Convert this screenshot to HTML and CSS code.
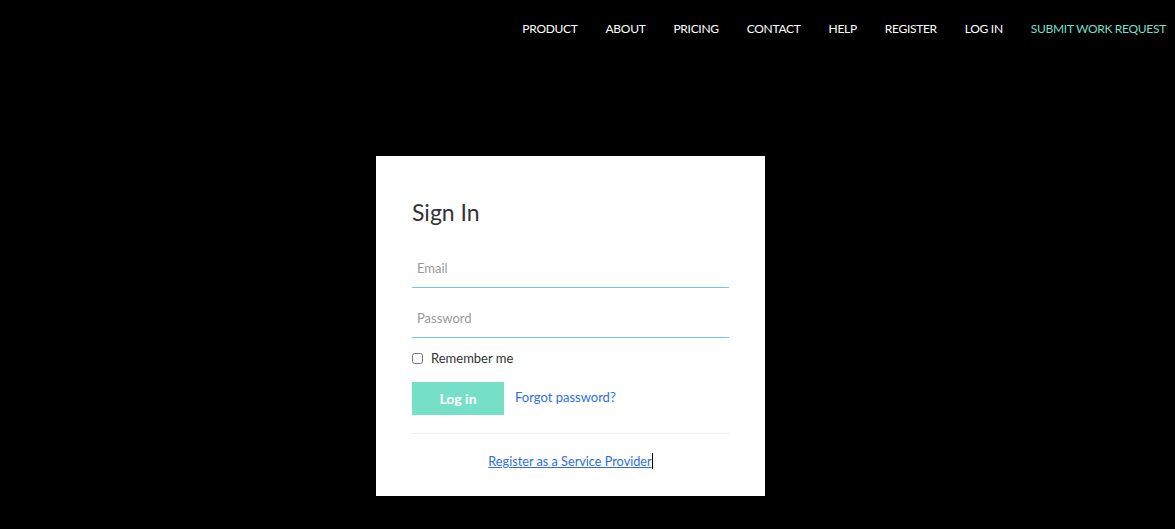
FILE: index.html
```html
<!DOCTYPE html>
<html lang="en">

<head>
    <meta charset="UTF-8">
    <meta name="viewport" content="width=device-width, initial-scale=1.0">
    <title>Sign In</title>
    <link rel="stylesheet" href="styles.css">
</head>

<body>
    <header class="top-bar">
        <ul class="nav">
            <li><a href="#">Product</a></li>
            <li><a href="#">About</a></li>
            <li><a href="#">Pricing</a></li>
            <li><a href="#">Contact</a></li>
            <li><a href="#">Help</a></li>
            <li><a href="#">Register</a></li>
            <li><a href="#">Log in</a></li>
            <li><a href="#" class="accent">Submit work request</a></li>
        </ul>
    </header>
    <main class="page">
        <form class="login-card">
            <h1 class="title">Sign In</h1>
            <input class="field" type="text" placeholder="Email">
            <input class="field" type="password" placeholder="Password">
            <label class="remember"><input type="checkbox"> Remember me</label>
            <div class="actions">
                <button type="button" class="btn">Log in</button>
                <a href="#" class="link">Forgot password?</a>
            </div>
            <div class="footer">
                <a href="#" class="link under">Register as a Service Provider</a><span class="caret"></span>
            </div>
        </form>
    </main>
</body>

</html>
```

FILE: styles.css
```css
body {
    margin: 0;
    padding: 0;
    background: #000;
    font-family: Lato, "Liberation Sans", sans-serif;
}

.top-bar {
    height: 52px;
    display: flex;
    justify-content: flex-end;
    align-items: center;
    padding-right: 9px;
    margin-bottom: 4px;
}

.nav {
    display: flex;
    gap: 28px;
    margin: 0;
    padding: 0;
    list-style: none;
}

.nav a {
    color: #fff;
    font-size: 12px;
    text-transform: uppercase;
    text-decoration: none;
    letter-spacing: -0.3px;
}

.nav a.accent {
    color: #76dfc8;
}

.page {
    display: flex;
    justify-content: center;
    padding-top: 100px;
}

.login-card {
    width: 317px;
    padding: 36px 36px 20px;
    background: #fff;
    margin-left: -34px;
}

.title {
    margin: 0 0 15px;
    font-size: 23px;
    font-weight: 400;
    color: #333;
    line-height: 40px;
}

.field {
    display: block;
    box-sizing: border-box;
    width: 100%;
    height: 41px;
    margin-bottom: 9px;
    padding: 0 5px;
    border: 0;
    box-shadow: inset 0 -1px 0 #6cccd0;
    font-family: inherit;
    font-size: 13px;
    color: #333;
    background: #fff;
    outline: none;
}

.field::placeholder {
    color: #999;
}

.remember {
    display: flex;
    align-items: center;
    gap: 8px;
    font-size: 13px;
    color: #333;
    margin-top: 12px;
}

.remember input {
    margin: 0;
    width: 11px;
    height: 11px;
}

.actions {
    display: flex;
    align-items: flex-start;
    gap: 11px;
    margin-top: 16px;
    padding-bottom: 18px;
    border-bottom: 1px solid #eee;
}

.btn {
    width: 92px;
    height: 33px;
    border: none;
    background: #76dfc8;
    color: #fff;
    font-family: inherit;
    font-size: 14px;
    font-weight: 700;
}

.link {
    color: #2d6fe0;
    font-size: 13px;
    text-decoration: none;
    line-height: 30px;
}

.link.under {
    font-size: 12.7px;
    text-decoration: underline;
}

.footer {
    display: flex;
    justify-content: center;
    align-items: center;
    margin-top: 12px;
}

.caret {
    width: 1px;
    height: 16px;
    background: #000;
}
```
